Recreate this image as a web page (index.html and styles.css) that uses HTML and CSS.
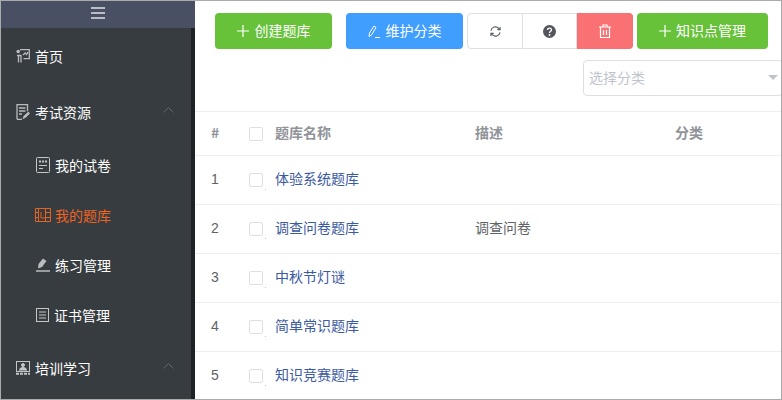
FILE: index.html
```html
<!DOCTYPE html>
<html lang="zh">
<head>
<meta charset="utf-8">
<title>我的题库</title>
<link rel="stylesheet" href="styles.css">
</head>
<body>
<div class="app">
  <aside class="sidebar">
    <div class="toggler">
      <svg class="burger" width="14" height="12" viewBox="0 0 14 12"><path d="M0 1h14M0 6h14M0 11h14" stroke="#dfe1e6" stroke-width="1.6"/></svg>
    </div>
    <nav class="menu">
      <a class="item">
        <svg class="ico" width="14" height="14" viewBox="0 0 14 14" fill="none" stroke="#b9bcbe" stroke-width="1.300"><path d="M4 .7h9.300v9H7.500M1 6.500h4v7M2.500 6.500v7M7 6l2.200-2 1.500 1.500L12 3"/><circle cx="2.200" cy="2.500" r="1.800" fill="#b9bcbe" stroke="none"/></svg>
        <span>首页</span>
      </a>
      <a class="item">
        <svg class="ico" width="14" height="16" viewBox="0 0 14 16" fill="none" stroke="#b9bcbe" stroke-width="1.300"><path d="M1 15.300V.7h10.500v6.500M3 4h6.500M3 7h6.500M3 10h3M6 15.300H1"/><path d="M7 14.500l1-2.500 4.500-4 1 1.500-4 4z" fill="#b9bcbe" stroke-width=".8"/></svg>
        <span>考试资源</span>
        <svg class="chev" width="11" height="6" viewBox="0 0 11 6" fill="none" stroke="#63676b"><path d="M.5 5.500l5-5 5 5"/></svg>
      </a>
      <a class="item sub">
        <svg class="ico" width="14" height="16" viewBox="0 0 14 16" fill="none" stroke="#c4c6c8"><rect x=".5" y=".5" width="13" height="15" rx="1"/><path d="M3 4.500h8" stroke-width="2" stroke-dasharray="2 1"/><path d="M3 8.500h8M3 11.500h4"/></svg>
        <span>我的试卷</span>
      </a>
      <a class="item sub active">
        <svg class="ico ico-wide" width="16" height="14" viewBox="0 0 16 14" fill="none" stroke="#e8621f"><path d="M.5.500h15v13H.5zM.5 4.500h3M.5 9.500h3M3.500.5v13M10.500.500v13M6 4v6h4.500M10.500 4.500h5M10.500 9.500h5"/></svg>
        <span>我的题库</span>
      </a>
      <a class="item sub">
        <svg class="ico" width="14" height="14" viewBox="0 0 14 14" fill="none"><path d="M2 10.500l.5-4.500L7 .5 10.500 3 6 9z" fill="#b9bcbe"/><path d="M0 13h14" stroke="#c4c6c8" stroke-width="1.400"/></svg>
        <span>练习管理</span>
      </a>
      <a class="item sub">
        <svg class="ico" width="13" height="14" viewBox="0 0 13 14" fill="none" stroke="#c4c6c8"><rect x=".5" y=".5" width="12" height="13"/><path d="M3 4h7M3 7h7M3 10h7"/></svg>
        <span>证书管理</span>
      </a>
      <a class="item">
        <svg class="ico" width="14" height="14" viewBox="0 0 14 14" fill="none" stroke="#c4c6c8"><rect x=".5" y=".5" width="13" height="10"/><path d="M3.500 9.500c0-2 1-3 3.500-3s3.500 1 3.500 3" fill="#c4c6c8"/><circle cx="7" cy="4" r="1.500" fill="#c4c6c8"/><path d="M0 12.800h14" stroke-width="2" stroke-dasharray="3 1"/></svg>
        <span>培训学习</span>
        <svg class="chev" width="11" height="6" viewBox="0 0 11 6" fill="none" stroke="#63676b"><path d="M.5 5.500l5-5 5 5"/></svg>
      </a>
    </nav>
  </aside>
  <main class="main">
    <div class="toolbar">
      <div class="btn-row">
        <button class="btn green">
          <svg width="12" height="12" viewBox="0 0 12 12"><path d="M6 0v12M0 6h12" stroke="#fff" stroke-width="1.200"/></svg>
          <span>创建题库</span>
        </button>
        <button class="btn blue">
          <svg width="12" height="14" viewBox="0 0 12 14" fill="none" stroke="#fff"><path d="M1 12.500l.5-3.500L6 2l2 1.500L3.500 11zM7 13.500h5"/></svg>
          <span>维护分类</span>
        </button>
        <div class="group">
          <button class="seg">
            <svg width="11" height="11" viewBox="0 0 12 12" fill="none" stroke="#555a62" stroke-width="1.200"><path d="M1 5a5 5 0 0 1 8.500-2.500L11 4M11 7a5 5 0 0 1-8.500 2.500L1 8"/><path d="M11 1v3H8M1 11V8h3"/></svg>
          </button>
          <button class="seg mid">
            <svg width="13" height="13" viewBox="0 0 13 13"><circle cx="6.500" cy="6.500" r="6.500" fill="#53565c"/><path d="M4.500 5c0-2.500 4-2.500 4 0 0 1.300-2 1.300-2 3" fill="none" stroke="#fff" stroke-width="1.300"/><circle cx="6.500" cy="10" r=".9" fill="#fff"/></svg>
          </button>
          <button class="seg red">
            <svg width="12" height="14" viewBox="0 0 12 14" fill="none" stroke="#fff" stroke-width="1.200"><path d="M0 3h12M4 3V1h4v2M1.500 3v10.500h9V3M4.500 6v5M7.500 6v5"/></svg>
          </button>
        </div>
        <button class="btn green wide">
          <svg width="12" height="12" viewBox="0 0 12 12"><path d="M6 0v12M0 6h12" stroke="#fff" stroke-width="1.200"/></svg>
          <span>知识点管理</span>
        </button>
      </div>
      <div class="select">
        <span>选择分类</span>
        <i class="caret"></i>
      </div>
    </div>
    <table class="grid">
      <colgroup>
        <col class="c-num"><col class="c-check"><col class="c-col"><col class="c-col"><col class="c-last">
      </colgroup>
      <thead>
        <tr><th class="num">#</th><th class="check"><i class="box"></i></th><th>题库名称</th><th>描述</th><th>分类</th></tr>
      </thead>
      <tbody>
        <tr><td class="num">1</td><td class="check"><i class="box"></i><i class="dot"></i></td><td class="link">体验系统题库</td><td></td><td></td></tr>
        <tr><td class="num">2</td><td class="check"><i class="box"></i><i class="dot"></i></td><td class="link">调查问卷题库</td><td>调查问卷</td><td></td></tr>
        <tr><td class="num">3</td><td class="check"><i class="box"></i><i class="dot"></i></td><td class="link">中秋节灯谜</td><td></td><td></td></tr>
        <tr><td class="num">4</td><td class="check"><i class="box"></i><i class="dot"></i></td><td class="link">简单常识题库</td><td></td><td></td></tr>
        <tr><td class="num">5</td><td class="check"><i class="box"></i><i class="dot"></i></td><td class="link">知识竞赛题库</td><td></td><td></td></tr>
      </tbody>
    </table>
  </main>
</div>
</body>
</html>
```
FILE: styles.css
```css
* { box-sizing: border-box; }
html, body { margin: 0; height: 100%; overflow: hidden; }
body {
  font-family: "Noto Sans CJK SC", "Noto Sans", sans-serif;
  font-size: 14px;
  color: #606266;
  background: #fff;
}
.app {
  display: flex;
  width: 782px;
  height: 400px;
  border: 1px solid #ababab;
  overflow: hidden;
}
.sidebar {
  flex: 0 0 194px;
  display: flex;
  flex-direction: column;
  background: #373c40;
}
.toggler {
  flex: 0 0 27px;
  display: flex;
  align-items: center;
  justify-content: center;
  background: #4a5064;
}
.burger { margin-bottom: 3px; }
.menu {
  flex: 1;
  border-right: 4px solid #1f2225;
  overflow: hidden;
}
.item {
  display: flex;
  align-items: center;
  height: 56px;
  padding: 0 16px 0 15px;
  gap: 5px;
  color: #fff;
  white-space: nowrap;
}
.item.sub {
  height: 50px;
  padding-left: 35px;
}
.item.active { color: #ee6320; }
.ico { flex: 0 0 auto; }
.ico-wide { margin: 0 -1px; }
.chev { margin-left: auto; margin-right: 1px; margin-top: -4px; }
.main {
  flex: 1;
  min-width: 0;
  overflow: hidden;
}
.toolbar {
  padding: 12px 0 15px 20px;
  width: 620px;
}
.btn-row {
  display: flex;
  align-items: center;
}
button {
  font: inherit;
  margin: 0;
  cursor: pointer;
}
.btn {
  display: flex;
  align-items: center;
  justify-content: center;
  gap: 6px;
  width: 117px;
  height: 36px;
  border: 0;
  border-radius: 4px;
  color: #fff;
  padding: 0 0 2px;
}
.btn svg { margin-top: 2px; }
.green { background: #67c23a; }
.blue { background: #409eff; margin-left: 14px; }
.wide { width: 131px; margin-left: 4px; gap: 5px; }
.group {
  display: flex;
  margin-left: 4px;
}
.seg {
  display: flex;
  align-items: center;
  justify-content: center;
  width: 56px;
  height: 36px;
  padding: 0;
  background: #fff;
  border: 1px solid #dcdfe6;
  border-left-width: 0;
}
.seg:first-child {
  border-left-width: 1px;
  border-radius: 4px 0 0 4px;
}
.seg.mid { width: 54px; }
.seg.red {
  width: 56px;
  background: #f97172;
  border-color: #f97172;
  border-radius: 0 4px 4px 0;
}
.select {
  display: flex;
  align-items: center;
  justify-content: space-between;
  width: 200px;
  height: 36px;
  margin: 11px 0 0 368px;
  padding: 0 4px 2px 5px;
  border: 1px solid #dcdfe6;
  border-radius: 4px;
  color: #c0c4cc;
}
.caret {
  width: 0;
  height: 0;
  border-style: solid;
  border-width: 5px 5px 0;
  border-color: #c0c4cc transparent transparent;
}
.grid {
  width: 587px;
  table-layout: fixed;
  border-collapse: separate;
  border-spacing: 0;
}
.c-num { width: 54px; }
.c-check { width: 26px; }
.c-col { width: 200px; }
.c-last { width: 107px; }
th, td {
  padding: 0 0 5px;
  text-align: left;
  border-bottom: 1px solid #ebeef5;
  white-space: nowrap;
}
th {
  height: 45px;
  padding-bottom: 3px;
  border-top: 1px solid #ebeef5;
  font-weight: 700;
  color: #909399;
}
td { height: 49px; }
th.num, td.num { padding-left: 16px; }
td.num {
  padding-bottom: 3px;
  font-family: "Liberation Sans", sans-serif;
  font-size: 14px;
}
td.check { padding-bottom: 3px; }
.link { color: #3c5a9f; }
.box {
  display: inline-block;
  width: 14px;
  height: 14px;
  border: 1px solid #dcdfe6;
  border-radius: 2px;
  background: #fff;
  vertical-align: middle;
}
.dot {
  display: inline-block;
  width: 1px;
  height: 1px;
  margin-left: 2px;
  background: #d8c3a8;
  vertical-align: -6px;
}
```
